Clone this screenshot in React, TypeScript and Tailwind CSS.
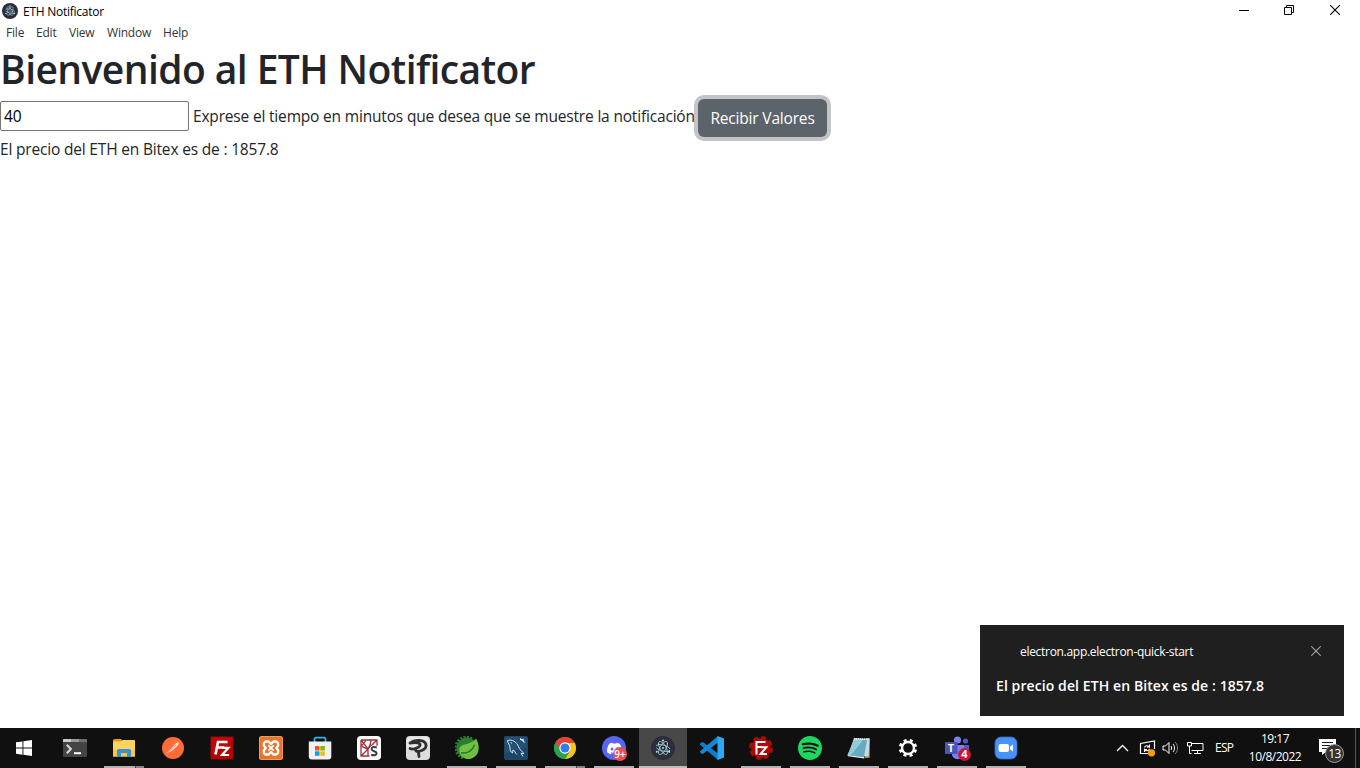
import type { ReactNode } from 'react'
import { SiDiscord, SiSpotify } from 'react-icons/si'

function Svg({ children, size = 24 }: { children: ReactNode; size?: number }) {
  return (
    <svg width={size} height={size} viewBox={`0 0 ${size} ${size}`} fill="none" className="block shrink-0">
      {children}
    </svg>
  )
}

function ElectronIcon({ size = 24 }: { size?: number }) {
  return (
    <svg width={size} height={size} viewBox="0 0 24 24" fill="none" className="block shrink-0">
      <circle cx="12" cy="12" r="12" fill="#2b2e3a" />
      <g stroke="#a5d3da" strokeWidth="0.8">
        <ellipse cx="12" cy="12" rx="7.3" ry="3" transform="rotate(15 12 12)" strokeDasharray="15 2.500" />
        <ellipse cx="12" cy="12" rx="7.3" ry="3" transform="rotate(60 12 12)" />
        <ellipse cx="12" cy="12" rx="7.3" ry="3" transform="rotate(120 12 12)" />
      </g>
      <circle cx="12" cy="12" r="0.9" fill="#b5e9f0" />
      <circle cx="5.8" cy="15.8" r="1" fill="#b5e9f0" />
      <circle cx="18.2" cy="15.8" r="1" fill="#b5e9f0" />
      <circle cx="12" cy="4.5" r="1" fill="#b5e9f0" />
    </svg>
  )
}

function FzLetters() {
  return (
    <>
      <path d="M5.500 18.500 8 6h9.500M7.300 11.500h7" stroke="#fff" strokeWidth="2.600" />
      <path d="M12 11.800h6.500L12 19h7.200" stroke="#fff" strokeWidth="2.200" />
    </>
  )
}

const terminal = (
  <Svg>
    <rect y="3" width="24" height="18" rx="1" fill="#444" />
    <path d="M0 4a1 1 0 0 1 1-1h7v3H0z" fill="#ccc" />
    <path d="M8 3h8v3H8z" fill="#999" />
    <path d="M16 3h7a1 1 0 0 1 1 1v2h-8z" fill="#707070" />
    <path d="m3.800 8.800 4 4.200-4 4.200" stroke="#d4d4d4" strokeWidth="2.200" />
    <path d="M11 17.200h7" stroke="#fff" strokeWidth="2" />
  </Svg>
)

const explorer = (
  <Svg>
    <path d="M1 4.500A1.500 1.500 0 0 1 2.500 3H9l2 2v4H1z" fill="#e49c08" />
    <path d="M1 5.500h8L11 4h11a1 1 0 0 1 1 1v15.500H1z" fill="#ffd45e" />
    <path d="M1 14h22v6.500H1z" fill="#f9c744" />
    <path d="M5 21v-6.500a1.500 1.500 0 0 1 1.500-1.500h11a1.500 1.500 0 0 1 1.500 1.500V21h-4v-4H9v4z" fill="#3990d8" />
  </Svg>
)

const postman = (
  <Svg>
    <circle cx="12" cy="12" r="11" fill="#ff6c37" />
    <path d="M5.500 17.500 12 10.500c2-2.200 4-4.200 5.300-4.200 1 1 .2 3-2.300 4.900L10 15.500z" fill="#ffe3d8" />
    <path d="m6 17.500 9-8.500" stroke="#e77b55" strokeWidth=".6" />
  </Svg>
)

const filezilla = (
  <Svg>
    <rect x=".8" y=".8" width="22.400" height="22.400" fill="#b30000" stroke="#8d0808" strokeWidth="1.300" strokeDasharray="1.200 1" />
    <path d="M1.500 1.500h21v4L1.500 19z" fill="#bf0808" />
    <FzLetters />
  </Svg>
)

const xampp = (
  <Svg>
    <rect width="24" height="24" rx="2.500" fill="#f09a5c" />
    <rect x="1" y="1" width="22" height="22" rx="2" fill="#e8752a" />
    <path
      d="M7.500 5.500h2.200L12 8l2.300-2.500h2.200a2.600 2.600 0 0 1 2.600 2.600v1.600L17.200 12l1.900 2.300v1.600a2.600 2.600 0 0 1-2.600 2.600h-2.200L12 16l-2.300 2.500H7.500a2.600 2.600 0 0 1-2.600-2.600v-1.600L6.800 12 4.900 9.700V8.100a2.600 2.600 0 0 1 2.600-2.600z"
      stroke="#fff"
      strokeWidth="2.400"
      strokeLinejoin="round"
    />
    <path d="m9.300 9.300 5.400 5.400M14.700 9.300l-5.400 5.400" stroke="#fff" strokeWidth="1.700" />
  </Svg>
)

const store = (
  <Svg>
    <path d="M6.500 6V3a1.300 1.300 0 0 1 1.300-1.300h8.400A1.300 1.300 0 0 1 17.500 3v3" stroke="#29b6ef" strokeWidth="1.800" />
    <path d="M.8 5.500h22.500v15a3 3 0 0 1-3 3H3.800a3 3 0 0 1-3-3z" fill="#f1f1f1" />
    <path d="M7 10h4.500v4.500H7z" fill="#f25022" />
    <path d="M12.300 10h4.500v4.500h-4.500z" fill="#7fba00" />
    <path d="M7 15.300h4.500v4.500H7z" fill="#00a4ef" />
    <path d="M12.300 15.300h4.500v4.500h-4.500z" fill="#ffb900" />
  </Svg>
)

const webS = (
  <Svg>
    <rect width="24" height="24" rx="4" fill="#fff" />
    <path d="M4 4h16v6M4 4v16h8.500M4 4l7 9 9-9M4 9.500c2 2 4 3 7 3.500M14 4c0 4-1 6-3 9M11 13 4 20M11 13v7M8.500 4c0 2-2 4-4.500 5.500" stroke="#a12e38" strokeWidth="1.300" />
    <path d="M19.800 11.500c-3-1-5.200-.4-5.200 1.500 0 2.700 5 1.800 5 4.300 0 2-2.700 2.600-5.400 1.500" stroke="#fff" strokeWidth="3.600" />
    <path d="M19.800 11.500c-3-1-5.200-.4-5.200 1.500 0 2.700 5 1.800 5 4.300 0 2-2.700 2.600-5.400 1.500" stroke="#333b42" strokeWidth="2" />
  </Svg>
)

const clip = (
  <Svg>
    <rect width="24" height="24" rx="4" fill="#dcdcdc" />
    <rect x="1" y="1" width="22" height="11" rx="3" fill="#e9e9e9" />
    <path
      d="M4 7C8 3.800 16.500 3.200 19.300 7c2.500 4-1.300 7.500-6 8.300M13.300 15.300c-2.500.5-4-.3-3.500-1.800M4 7c3-.3 8.500-.8 10 1.200 1 2.800-6.500 6-10 4.300M12.500 16.500l.5 4"
      stroke="#303030"
      strokeWidth="2.800"
      strokeLinecap="round"
      strokeLinejoin="round"
    />
  </Svg>
)

const spring = (
  <Svg>
    <circle cx="12" cy="12" r="10.500" fill="#2a7f2f" />
    <path d="M17 2.500A10.800 10.800 0 1 0 8 22" stroke="#2a7f2f" strokeWidth="2.600" strokeDasharray="2 1.400" />
    <path d="M5 17.500C1.500 8.500 10 9 15 6.700c2.500-1 5-2.200 6-4.200 4 7 4 15.500-2.500 19C13 24.500 8 23 5 17.500z" fill="#72bf44" />
    <path d="M6 16.800c5.500.9 11.500-1.500 13.500-8" stroke="#247d2c" strokeWidth="1.400" />
    <path d="M6 20c6 1.500 13.500 0 16.500-7" stroke="#65b83c" strokeWidth="1" />
  </Svg>
)

const mysql = (
  <Svg>
    <rect width="24" height="24" rx="2" fill="#1d4668" />
    <path d="M1 1h22v10L1 18z" fill="#235176" />
    <path d="M3.500 4.500c5-1.500 9 1.500 11 6 1 3 3 4.500 5.500 7l-3-.2 2 3.200M3.500 4.500c0 3 2.500 4 2.500 7 0 2.500.5 4.500 2.500 5.500l.5-3c2 .5 2 3 4 4.500M6.500 6.500l1.500.8" stroke="#d8e6ee" strokeWidth="1" />
    <path d="m16 2 2 1.500 1.500-1 .3 3 2 .8-2.200.3L18 4.500 16 4z" fill="#fff" />
  </Svg>
)

const chrome = (
  <Svg>
    <circle cx="12" cy="12" r="11" fill="#2ba24c" />
    <path d="M12 12 2.500 6.500A11 11 0 0 1 21.500 6.500z" fill="#e94235" />
    <path d="M12 7h9.800A11 11 0 0 1 12 23l5-8z" fill="#fcc31e" />
    <path d="M2.500 6.500 8 16l4-9z" fill="#e94235" />
    <path d="M2.500 6.500A11 11 0 0 0 12 23l4.500-8H8z" fill="#2ba24c" />
    <circle cx="12" cy="12" r="5.700" fill="#fff" />
    <circle cx="12" cy="12" r="4.500" fill="#2f7de9" />
  </Svg>
)

const discord = (
  <div className="relative size-6">
    <div className="flex size-6 items-center justify-center rounded-full bg-[#5865f2]">
      <SiDiscord size={15} color="#fff" />
    </div>
    <div className="absolute top-[11px] left-[11px] flex size-[14px] items-center justify-center rounded-full bg-[#ec4d50] text-[10px] font-semibold text-white">
      9+
    </div>
  </div>
)

const vscode = (
  <Svg>
    <path d="M.2 7.600 2 6.200c.4-.3.900-.3 1.200 0L18 17.500V24L.3 8.900c-.4-.4-.4-.9-.1-1.300z" fill="#087fce" />
    <path d="m.2 16.400 1.800 1.400c.4.300.9.300 1.200 0L18 6.500V0L.3 15.100c-.4.400-.4.900-.1 1.300z" fill="#1687cf" />
    <path d="m17.500 0 6.500 2.500v19L17.500 24z" fill="#2aaaf2" />
  </Svg>
)

const filezillaServer = (
  <Svg>
    <circle cx="12" cy="12" r="10" fill="#b00707" />
    <circle cx="12" cy="12" r="10.500" stroke="#b00707" strokeWidth="3" strokeDasharray="4.850 3.400" />
    <path d="M7.500 18.500V6h9M7.500 11h6" stroke="#fff" strokeWidth="2" />
    <path d="M11.500 11.300h5.800L11.500 18H18" stroke="#fff" strokeWidth="2" />
  </Svg>
)

const spotify = <SiSpotify size={24} color="#1ed760" />

const notepad = (
  <Svg>
    <path d="m20 2 3 .8-.3 19-5.200.5z" fill="#b7884a" />
    <path d="M7 2 19.500 3l3-1-1 18.500L1 19z" fill="#c4dce2" />
    <path d="M7.500 3.500 20 4l-3 17L.5 19z" fill="#66acc0" />
    <path d="M7.500 3.500 16 4 4 19.300.500 19z" fill="#95cbd8" />
    <path d="m.5 19 16.500 2 .2 1.500L1 20.200z" fill="#e4edef" />
    <path d="M7 3h14" stroke="#eef3f4" strokeWidth="1.600" strokeDasharray="1.300 .7" />
  </Svg>
)

const settings = (
  <Svg>
    <circle cx="12" cy="12" r="6" stroke="#fff" strokeWidth="2.400" />
    <circle cx="12" cy="12" r="7.900" stroke="#fff" strokeWidth="2.600" strokeDasharray="3.100 3.105" strokeDashoffset="-1.500" />
  </Svg>
)

const teams = (
  <div className="relative size-6">
    <Svg>
      <circle cx="12.500" cy="4" r="3.600" fill="#7b83eb" />
      <circle cx="20.500" cy="5" r="2.600" fill="#5059c9" />
      <path d="M15 9h9v8c0 4-6 5-9 2z" fill="#5059c9" />
      <path d="M6 9h13v8c0 8-12 8-12 1z" fill="#7b83eb" />
      <rect y="6" width="12.500" height="12" rx=".8" fill="#4b53bc" />
    </Svg>
    <div className="absolute top-[6px] left-0 flex h-3 w-3 items-center justify-center text-[11px] font-bold text-white">T</div>
    <div className="absolute top-[12px] left-[13px] flex size-[13px] items-center justify-center rounded-full bg-[#cc1436] text-[11px] font-bold text-white">4</div>
  </div>
)

const zoom = (
  <Svg>
    <rect x="1" y="1" width="22" height="22" rx="6" fill="#4892f8" stroke="#3472c9" strokeWidth=".8" />
    <rect x="4.500" y="8" width="10.500" height="8" rx="2" fill="#fff" />
    <path d="m16 10.800 3-2.300v7l-3-2.300z" fill="#fff" />
  </Svg>
)

type State = 'none' | 'open' | 'stacked' | 'active'

const apps: { name: string; icon: ReactNode; state: State }[] = [
  { name: 'terminal', icon: terminal, state: 'none' },
  { name: 'explorer', icon: explorer, state: 'stacked' },
  { name: 'postman', icon: postman, state: 'none' },
  { name: 'filezilla', icon: filezilla, state: 'none' },
  { name: 'xampp', icon: xampp, state: 'none' },
  { name: 'store', icon: store, state: 'none' },
  { name: 'web', icon: webS, state: 'none' },
  { name: 'clip', icon: clip, state: 'none' },
  { name: 'spring', icon: spring, state: 'open' },
  { name: 'mysql', icon: mysql, state: 'open' },
  { name: 'chrome', icon: chrome, state: 'stacked' },
  { name: 'discord', icon: discord, state: 'open' },
  { name: 'electron', icon: <ElectronIcon />, state: 'active' },
  { name: 'vscode', icon: vscode, state: 'none' },
  { name: 'fzserver', icon: filezillaServer, state: 'open' },
  { name: 'spotify', icon: spotify, state: 'open' },
  { name: 'notepad', icon: notepad, state: 'open' },
  { name: 'settings', icon: settings, state: 'open' },
  { name: 'teams', icon: teams, state: 'open' },
  { name: 'zoom', icon: zoom, state: 'open' },
]

function TaskButton({ icon, state }: { icon: ReactNode; state: State }) {
  return (
    <div className={`flex h-10 w-12 shrink-0 flex-col items-center ${state === 'active' ? 'bg-[#484848]' : ''}`}>
      <div className="flex h-[38px] items-center pt-[2px]">{icon}</div>
      {state === 'open' && <div className="h-[2px] w-10 bg-[#b1b1b1]" />}
      {state === 'active' && <div className="h-[2px] w-12 bg-[#bcbcbc]" />}
      {state === 'stacked' && (
        <div className="flex h-[2px] w-10 bg-[#444]">
          <div className="mr-px w-[31px] bg-[#b1b1b1]" />
          <div className="w-2 bg-[#858585]" />
        </div>
      )}
    </div>
  )
}

function Taskbar() {
  return (
    <footer className="flex h-10 bg-[#101010] text-white">
      <div className="flex h-10 w-[51px] shrink-0 items-center pl-4">
        <Svg size={16}>
          <path d="M0 2.300 6.500 1.400v6.200H0zM7.400 1.300 16 0v7.600H7.400zM0 8.500h6.500v6.200L0 13.800zM7.400 8.500H16V16l-8.600-1.200z" fill="#fff" />
        </Svg>
      </div>
      <div className="flex gap-px">
        {apps.map((a) => (
          <TaskButton key={a.name} icon={a.icon} state={a.state} />
        ))}
      </div>
      <div className="ml-auto flex h-10 items-center">
        <Svg size={13}>
          <path d="m1 9 5.500-5.500L12 9" stroke="#fff" strokeWidth="1.300" />
        </Svg>
        <svg width="17" height="17" viewBox="0 0 17 17" fill="none" className="ml-[10px]">
          <path d="M10 13.500H1.500v-10L15.500 1v8" stroke="#fff" strokeWidth="1.200" />
          <path d="M5.500 7.500c.5-2 3.500-2.500 5-.5V4.500M10.500 7H8M10.500 9c-.8 2-3.500 2.500-5 .5V12M5.500 9.500H8" stroke="#fff" strokeWidth="1.100" />
          <circle cx="12.500" cy="12.800" r="3.600" fill="#ff9a0c" />
        </svg>
        <svg width="17" height="16" viewBox="0 0 17 16" fill="none" className="ml-[6px]">
          <path d="M1 6h2.500L7 2.500v11L3.500 10H1z" stroke="#fff" />
          <path d="M9 6c.9 1 .9 3 0 4M11 4c2 2.200 2 5.800 0 8" stroke="#fff" />
          <path d="M13.300 2.200c3 3.300 3 8.300 0 11.600" stroke="#888" />
        </svg>
        <svg width="17" height="16" viewBox="0 0 17 16" fill="none" className="ml-[8px]">
          <path d="M5 3.500h11v7H4.500M10.500 10.500v3M7 13.500h7M.5 2.500h4v3.500h-4zM2.500 6v7.500h2" stroke="#fff" />
        </svg>
        <span className="ml-[11px] w-[20px] text-[12px] tracking-[-0.7px]">ESP</span>
        <div className="ml-[13px] flex w-[54px] flex-col items-center text-[12px] leading-[18px] tracking-[-0.5px]">
          <span>19:17</span>
          <span>10/8/2022</span>
        </div>
        <div className="relative ml-[17px] h-6 w-[26px]">
          <Svg size={24}>
            <path d="M0 3h17v13H7l-4 3v-3H0z" fill="#fff" />
            <path d="M3 6.500h11M3 9.500h11M3 12.500h7" stroke="#171717" />
          </Svg>
          <div className="absolute top-[8px] left-[6px] flex size-[19px] items-center justify-center rounded-full border border-[#999] bg-[#333] text-[12px] tracking-[-0.7px] text-white">
            13
          </div>
        </div>
        <div className="ml-[10px] h-10 w-[5px] border-l border-[#555]" />
      </div>
    </footer>
  )
}

export default function App() {
  return (
    <div className="relative flex h-[768px] w-[1360px] flex-col overflow-hidden bg-white font-['Open_Sans','Noto_Sans',sans-serif] whitespace-nowrap">
      <header className="flex h-[22px] items-center">
        <div className="ml-[2px]">
          <ElectronIcon size={16} />
        </div>
        <span className="ml-[5px] pt-px text-[12px] tracking-[-0.25px] text-black">ETH Notificator</span>
        <div className="mr-[20px] ml-auto flex pb-[2px]">
          <Svg size={10}>
            <path d="M0 5.500h10" stroke="#000" />
          </Svg>
          <div className="mr-[36px] ml-[35px]">
            <Svg size={10}>
              <path d="M.5 2.500h7v7h-7zM2.500 2.500v-2h7v7h-2" stroke="#000" />
            </Svg>
          </div>
          <Svg size={10}>
            <path d="m0 0 10 10M10 0 0 10" stroke="#000" strokeWidth="1.100" />
          </Svg>
        </div>
      </header>
      <nav className="flex h-[22px] text-[12px] leading-[22px] tracking-[-0.2px] text-[#333]">
        <span className="ml-[6px] w-[30px]">File</span>
        <span className="w-[33px]">Edit</span>
        <span className="w-[38px]">View</span>
        <span className="w-[56px]">Window</span>
        <span>Help</span>
      </nav>
      <main className="flex-1 text-[15.5px] tracking-[-0.18px] text-[#212529]">
        <h1 className="h-[48px] text-[39px] leading-[49px] font-semibold tracking-[-0.57px]">Bienvenido al ETH Notificator</h1>
        <div className="flex h-[45px] items-start pt-[7px]">
          <input defaultValue="40" className="mt-[2px] h-[30px] w-[189px] rounded-[2px] border border-[#767676] px-[3px] text-black outline-none" />
          <span className="ml-[4px] w-[505px] pt-[5px] leading-6">Exprese el tiempo en minutos que desea que se muestre la notificación</span>
          <button className="h-[38px] w-[129px] shrink-0 rounded-[6px] bg-[#5c636a] leading-6 text-white ring-4 ring-[#c1c4c9]">Recibir Valores</button>
        </div>
        <p className="leading-6">El precio del ETH en Bitex es de : 1857.8</p>
      </main>
      <aside className="absolute top-[625px] left-[980px] flex h-[91px] w-[364px] flex-col bg-[#1f1f1f] pl-4 text-white">
        <div className="mt-[16px] flex h-5 items-center pr-[23px] pl-6">
          <span className="pt-[2px] text-[12px] tracking-[-0.3px]">electron.app.electron-quick-start</span>
          <svg width="10" height="10" viewBox="0 0 10 10" className="ml-auto">
            <path d="m.3.300 9.400 9.400M9.700.300.3 9.700" stroke="#a5a5a5" strokeWidth="1.100" />
          </svg>
        </div>
        <span className="mt-[14px] text-[14px] leading-[22px] font-semibold tracking-[0.09px]">El precio del ETH en Bitex es de : 1857.8</span>
      </aside>
      <Taskbar />
    </div>
  )
}
